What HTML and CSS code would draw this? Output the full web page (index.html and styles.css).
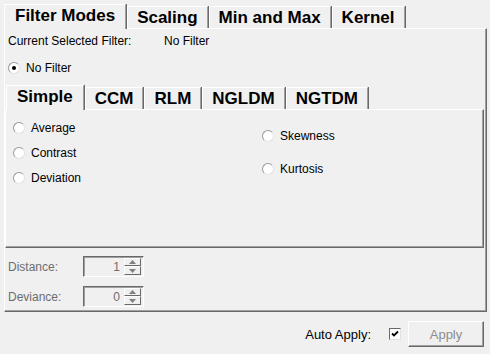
FILE: index.html
```html
<!DOCTYPE html>
<html lang="en">
<head>
    <meta charset="UTF-8">
    <title>Filter Modes</title>
    <link rel="stylesheet" href="styles.css">
</head>
<body>
    <div class="tabwidget outer">
        <div class="tabbar">
            <div class="tab active">Filter Modes</div>
            <div class="tab">Scaling</div>
            <div class="tab">Min and Max</div>
            <div class="tab">Kernel</div>
        </div>
        <div class="pane outer-pane">
            <div class="current-row">
                <span class="current-label">Current Selected Filter:</span>
                <span>No Filter</span>
            </div>
            <div class="radio-row top-radio"><span class="radio checked"></span>No Filter</div>

            <div class="tabwidget inner">
                <div class="tabbar">
                    <div class="tab active">Simple</div>
                    <div class="tab">CCM</div>
                    <div class="tab">RLM</div>
                    <div class="tab">NGLDM</div>
                    <div class="tab">NGTDM</div>
                </div>
                <div class="pane inner-pane">
                    <div class="col col-left">
                        <div class="radio-row"><span class="radio"></span>Average</div>
                        <div class="radio-row"><span class="radio"></span>Contrast</div>
                        <div class="radio-row"><span class="radio"></span>Deviation</div>
                    </div>
                    <div class="col col-right">
                        <div class="radio-row"><span class="radio"></span>Skewness</div>
                        <div class="radio-row"><span class="radio"></span>Kurtosis</div>
                    </div>
                </div>
            </div>

            <div class="field-row first">
                <span class="field-label">Distance:</span>
                <div class="spinbox">
                    <span class="spin-value">1</span>
                    <div class="spin-buttons">
                        <span class="spin-btn"><svg width="7" height="4" viewBox="0 0 7 4"><path d="M3.5 0L7 4H0z" fill="#808080"/></svg></span>
                        <span class="spin-btn"><svg width="7" height="4" viewBox="0 0 7 4"><path d="M0 0H7L3.5 4z" fill="#808080"/></svg></span>
                    </div>
                </div>
            </div>
            <div class="field-row">
                <span class="field-label">Deviance:</span>
                <div class="spinbox">
                    <span class="spin-value">0</span>
                    <div class="spin-buttons">
                        <span class="spin-btn"><svg width="7" height="4" viewBox="0 0 7 4"><path d="M3.5 0L7 4H0z" fill="#808080"/></svg></span>
                        <span class="spin-btn"><svg width="7" height="4" viewBox="0 0 7 4"><path d="M0 0H7L3.5 4z" fill="#808080"/></svg></span>
                    </div>
                </div>
            </div>
        </div>
    </div>

    <div class="footer">
        <span class="auto-label">Auto Apply:</span>
        <span class="checkbox">
            <svg width="8" height="8" viewBox="0 0 8 8"><path d="M1 3.5L3 5.5L7 1.5" fill="none" stroke="#000" stroke-width="1.8"/></svg>
        </span>
        <div class="apply-btn">Apply</div>
    </div>
</body>
</html>
```

FILE: styles.css
```css
body {
    margin: 0;
    padding: 4px 0 0 4px;
    background-color: #f0f0f0;
    font-family: "Liberation Sans", Arial, sans-serif;
    font-size: 12px;
    color: #000;
    width: 486px;
    height: 350px;
    overflow: hidden;
}
.tabbar {
    display: flex;
    align-items: flex-end;
    height: 24px;
}
.tab {
    font-weight: bold;
    font-size: 17px;
    line-height: 21px;
    height: 22px;
    padding: 0 9px;
    border-top: 1px solid #fff;
    border-left: 1px solid #fff;
    border-right: 1px solid #a0a0a0;
    box-shadow: 1px 0 0 #696969;
    margin-right: 1px;
    box-sizing: border-box;
}
.tab.active {
    padding: 0 10px 2px;
    margin-bottom: -1px;
    height: 25px;
    background-color: #f0f0f0;
    position: relative;
    z-index: 1;
}
.outer {
    width: 483px;
}
.pane {
    border-top: 1px solid #fff;
    border-left: 1px solid #fff;
    border-right: 1px solid #696969;
    border-bottom: 1px solid #696969;
    box-shadow: inset -1px -1px 0 #a0a0a0;
    box-sizing: border-box;
}
.outer-pane {
    height: 284px;
    padding: 0 2px 0 0;
}
.current-row {
    display: flex;
    line-height: 14px;
    margin-top: 5px;
    padding-left: 3px;
}
.current-label {
    width: 156px;
}
.radio-row {
    display: flex;
    align-items: center;
    line-height: 14px;
    gap: 6px;
}
.top-radio {
    margin-top: 13px;
    padding-left: 3px;
}
.radio {
    width: 12px;
    height: 12px;
    box-sizing: border-box;
    border-radius: 50%;
    background-color: #fff;
    border: 1px solid;
    border-color: #9a9a9a #e2e2e2 #e2e2e2 #9a9a9a;
    display: flex;
    align-items: center;
    justify-content: center;
}
.radio.checked::after {
    content: "";
    width: 4px;
    height: 4px;
    border-radius: 50%;
    background-color: #000;
}
.inner {
    margin-top: 10px;
    width: 479px;
}
.inner .tabbar {
    padding-left: 1px;
}
.inner-pane {
    height: 139px;
    display: flex;
}
.col {
    display: flex;
    flex-direction: column;
}
.col-left {
    padding: 11px 0 0 7px;
    gap: 11px;
    width: 249px;
}
.col-right {
    padding-top: 19px;
    gap: 19px;
}
.field-row {
    display: flex;
    align-items: center;
    margin-top: 9px;
    padding-left: 3px;
    color: #6d6d6d;
}
.field-row.first {
    margin-top: 8px;
}
.field-label {
    width: 75px;
}
.spinbox {
    width: 61px;
    height: 21px;
    box-sizing: border-box;
    border: 1px solid;
    border-color: #696969 #fff #fff #696969;
    box-shadow: inset 1px 1px 0 #a0a0a0;
    display: flex;
    align-items: center;
    justify-content: flex-end;
    padding: 1px 2px 1px 0;
}
.spin-value {
    color: #6d6d6d;
    margin-right: 4px;
}
.spin-buttons {
    display: flex;
    flex-direction: column;
    height: 17px;
}
.spin-btn {
    width: 17px;
    height: 8px;
    box-sizing: border-box;
    border: 1px solid;
    border-color: #fff #696969 #696969 #fff;
    display: flex;
    align-items: center;
    justify-content: center;
}
.spin-btn + .spin-btn {
    height: 9px;
}
.footer {
    display: flex;
    align-items: center;
    justify-content: flex-end;
    margin-top: 9px;
    padding-right: 6px;
    font-size: 13px;
}
.auto-label {
    margin-right: 18px;
}
.checkbox {
    width: 12px;
    height: 12px;
    box-sizing: border-box;
    background-color: #fff;
    border: 1px solid;
    border-color: #696969 #e2e2e2 #e2e2e2 #696969;
    display: flex;
    align-items: center;
    justify-content: center;
    margin-right: 7px;
}
.apply-btn {
    width: 76px;
    height: 26px;
    box-sizing: border-box;
    border: 1px solid;
    border-color: #fff #696969 #696969 #fff;
    box-shadow: inset -1px -1px 0 #a0a0a0;
    display: flex;
    align-items: center;
    justify-content: center;
    color: #8d8d8d;
}
```
